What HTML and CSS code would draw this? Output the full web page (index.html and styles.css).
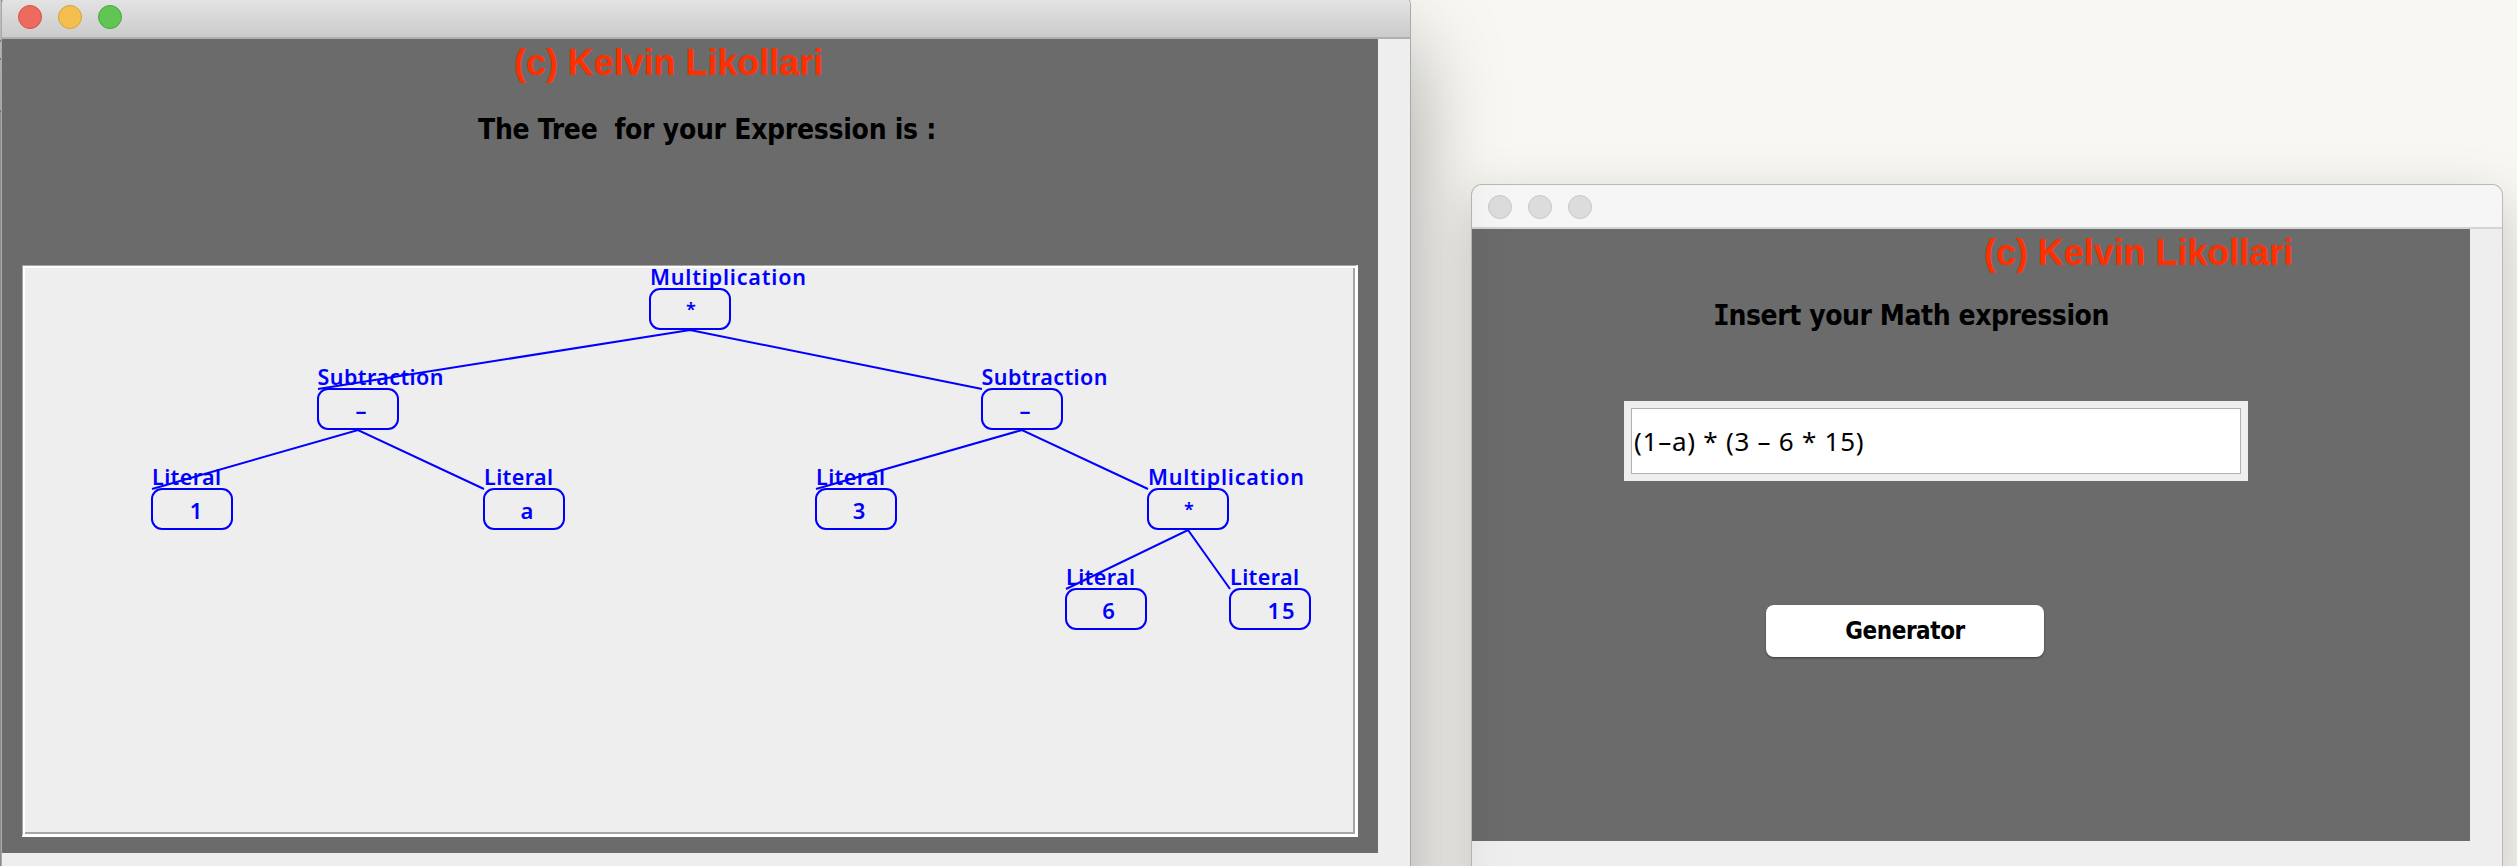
FILE: index.html
```html
<!DOCTYPE html>
<html lang="en">
<head>
<meta charset="utf-8">
<title>Expression Tree</title>
<link rel="stylesheet" href="styles.css">
</head>
<body>
<main class="desktop">
  <div class="edge"><i class="edge-a"></i><i class="edge-b"></i><i class="edge-c"></i></div>
  <section class="window window-tree">
    <header class="titlebar titlebar-active">
      <span class="light red"></span><span class="light yellow"></span><span class="light green"></span>
    </header>
    <div class="panel panel-tree">
      <p class="credit">(c) Kelvin Likollari</p>
      <h1 class="heading heading-tree">The Tree&nbsp; for your Expression is :</h1>
      <div class="canvas">
        <svg class="tree" width="1328" height="564" viewBox="25 268 1328 564">
          <g class="label">
            <text x="650" y="285" textLength="156">Multiplication</text>
            <text x="317.500" y="385" textLength="126">Subtraction</text>
            <text x="981.500" y="385" textLength="126">Subtraction</text>
            <text x="152" y="485" textLength="69">Literal</text>
            <text x="484" y="485" textLength="69">Literal</text>
            <text x="816" y="485" textLength="69">Literal</text>
            <text x="1148" y="485" textLength="156">Multiplication</text>
            <text x="1066" y="585" textLength="69">Literal</text>
            <text x="1230" y="585" textLength="69">Literal</text>
          </g>
          <g class="value">
            <text class="star" x="691" y="316">*</text>
            <text x="361" y="419">–</text>
            <text x="1025" y="419">–</text>
            <text x="196" y="519">1</text>
            <text x="527" y="519">a</text>
            <text x="859" y="519">3</text>
            <text class="star" x="1189" y="516">*</text>
            <text x="1108.500" y="619">6</text>
            <text x="1281" y="619" textLength="27">15</text>
          </g>
          <g class="box">
            <rect x="650" y="289" width="80" height="40" rx="10"/>
            <rect x="318" y="389" width="80" height="40" rx="10"/>
            <rect x="982" y="389" width="80" height="40" rx="10"/>
            <rect x="152" y="489" width="80" height="40" rx="10"/>
            <rect x="484" y="489" width="80" height="40" rx="10"/>
            <rect x="816" y="489" width="80" height="40" rx="10"/>
            <rect x="1148" y="489" width="80" height="40" rx="10"/>
            <rect x="1066" y="589" width="80" height="40" rx="10"/>
            <rect x="1230" y="589" width="80" height="40" rx="10"/>
          </g>
          <g class="link">
            <path d="M318 389L690 330L982 389"/>
            <path d="M152 489L358 430L484 489"/>
            <path d="M816 489L1022 430L1148 489"/>
            <path d="M1066 589L1188 530L1230 589"/>
          </g>
        </svg>
      </div>
    </div>
  </section>
  <section class="window window-form">
    <header class="titlebar titlebar-idle">
      <span class="light"></span><span class="light"></span><span class="light"></span>
    </header>
    <div class="panel panel-form">
      <p class="credit">(c) Kelvin Likollari</p>
      <h2 class="heading heading-form"><span class="serif-i">I</span>nsert your Math expression</h2>
      <div class="field"><div class="input">(1–a) * (3 – 6 * 15)</div></div>
      <button class="button" type="button">Generator</button>
    </div>
  </section>
</main>
</body>
</html>
```
FILE: styles.css
```css
* { box-sizing: border-box; }
body { margin: 0; overflow: hidden; background: #f8f7f2; }
.desktop { display: flex; align-items: flex-start; width: 2517px; height: 866px; overflow: hidden; }

.edge { width: 2px; height: 866px; background: #a9abab; display: flex; flex-direction: column; border-right: 1px solid #959797; }
.edge i { display: block; background: #c4c5c5; border-bottom: 2px solid #858787; }
.edge-a { height: 42px; }
.edge-b { height: 18px; }
.edge-c { height: 52px; }

.window { background: #eee; flex: none; }
.window-tree {
  position: relative; z-index: 2;
  width: 1408px; height: 920px; margin-top: -5px; border-radius: 10px 10px 0 0;
  box-shadow: 0 0 0 1px #a9aaa6, 0 50px 90px rgba(0, 0, 0, .36);
}
.window-form {
  width: 1030px; height: 720px; margin: 185px 0 0 62px; border-radius: 10px 10px 0 0;
  box-shadow: 0 0 0 1px #b9b9b5, 0 18px 56px rgba(0, 0, 0, .22);
}
.titlebar { display: flex; align-items: center; gap: 16px; height: 44px; padding-left: 16px; border-radius: 10px 10px 0 0; }
.titlebar-active { background: linear-gradient(#e6e6e6, #cbcbcb); border-bottom: 2px solid #b0b0b0; }
.titlebar-idle { background: #f6f6f6; border-bottom: 2px solid #d4d4d4; }
.light { width: 24px; height: 24px; border-radius: 50%; background: #dcdcdc; border: 1px solid #c8c8c8; margin-top: 2px; }
.red { background: #ed6a5f; border-color: #d65348; }
.yellow { background: #f5bf4f; border-color: #d9a03c; }
.green { background: #61c554; border-color: #4ba73e; }

.panel { background: #6b6b6b; display: flex; flex-direction: column; align-items: flex-start; }
.panel-tree { width: 1376px; height: 814px; padding-left: 20px; }
.panel-form { width: 998px; height: 612px; }

.credit { margin: 3px 0 0 492px; font: bold 36px/41px "Liberation Sans", Arial, sans-serif; letter-spacing: -.050px; color: #ff2f00; white-space: nowrap; }
.panel-form .credit { margin-left: 512px; }
.heading { margin: 0; font: bold 28px/34px "DejaVu Sans Condensed", "DejaVu Sans", sans-serif; font-stretch: condensed; color: #000; white-space: nowrap; }
.heading-tree { margin: 30px 0 0 456px; letter-spacing: -.280px; }
.heading-form { margin: 26px 0 0 241px; letter-spacing: -.430px; }
.serif-i { font-family: "DejaVu Sans Mono", monospace; font-stretch: normal; letter-spacing: -1.400px; }

.canvas {
  width: 1336px; height: 572px; margin-top: 118px; background: #eee;
  border: 1px solid #a5a5a5; border-right: 3px solid #fff; border-bottom: 3px solid #fff;
  box-shadow: inset 2px 2px #fff, inset -2px -2px #a5a5a5;
}
.tree { display: block; margin: 2px 0 0 2px; overflow: visible; }
.label, .value { font: 600 21.500px/1 "Noto Sans", "Open Sans", sans-serif; fill: #00f; }
.value { text-anchor: middle; font-size: 22px; }
.star { font-size: 18px; }
.box, .link { fill: none; stroke: #00f; stroke-width: 2; }

.field { width: 624px; height: 80px; margin: 68px 0 0 152px; padding: 7px; background: #eee; }
.input { height: 66px; border: 1px solid #b0b0b0; background: #fff; padding-left: 2px; font: 26px/64px "Noto Sans", sans-serif; letter-spacing: .750px; color: #000; white-space: pre; }
.button {
  width: 278px; height: 52px; margin: 124px 0 0 294px; padding: 0; border: 0; border-radius: 8px; background: #fff; color: #000;
  box-shadow: 0 1px 2px rgba(0, 0, 0, .45); font: bold 24px/50px "DejaVu Sans Condensed", "DejaVu Sans", sans-serif; font-stretch: condensed; letter-spacing: -.430px;
}
```
